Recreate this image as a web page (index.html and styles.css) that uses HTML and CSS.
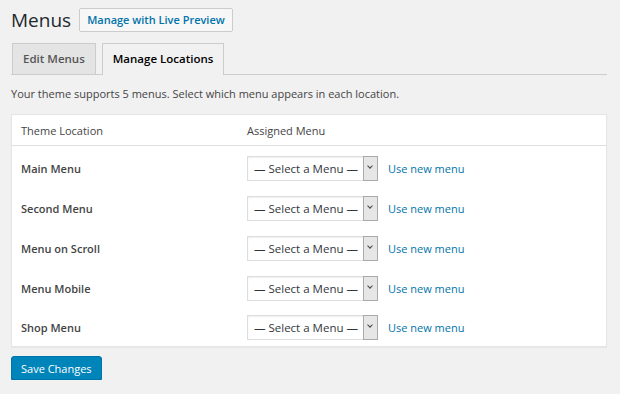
FILE: index.html
```html
<!DOCTYPE html>
<html lang="en">
<head>
<meta charset="UTF-8">
<title>Menus</title>
<link rel="stylesheet" href="styles.css">
</head>
<body>
    <div class="wrap">
        <!-- Title -->
        <div class="title-row">
            <h1>Menus</h1>
            <a href="#" class="title-action">Manage with Live Preview</a>
        </div>

        <!-- Tabs -->
        <div class="tabs">
            <a href="#" class="tab">Edit Menus</a>
            <a href="#" class="tab active">Manage Locations</a>
        </div>

        <p class="intro">Your theme supports 5 menus. Select which menu appears in each location.</p>

        <!-- Locations table -->
        <table class="locations">
            <thead>
                <tr>
                    <th class="col-location">Theme Location</th>
                    <th>Assigned Menu</th>
                </tr>
            </thead>
            <tbody>
                <tr>
                    <td class="col-location">Main Menu</td>
                    <td><span class="select">— Select a Menu —<span class="arrow"></span></span><a href="#" class="new-menu">Use new menu</a></td>
                </tr>
                <tr>
                    <td class="col-location">Second Menu</td>
                    <td><span class="select">— Select a Menu —<span class="arrow"></span></span><a href="#" class="new-menu">Use new menu</a></td>
                </tr>
                <tr>
                    <td class="col-location">Menu on Scroll</td>
                    <td><span class="select">— Select a Menu —<span class="arrow"></span></span><a href="#" class="new-menu">Use new menu</a></td>
                </tr>
                <tr>
                    <td class="col-location">Menu Mobile</td>
                    <td><span class="select">— Select a Menu —<span class="arrow"></span></span><a href="#" class="new-menu">Use new menu</a></td>
                </tr>
                <tr>
                    <td class="col-location">Shop Menu</td>
                    <td><span class="select">— Select a Menu —<span class="arrow"></span></span><a href="#" class="new-menu">Use new menu</a></td>
                </tr>
            </tbody>
        </table>

        <button class="save">Save Changes</button>
    </div>
</body>
</html>
```

FILE: styles.css
```css
body {
    margin: 0;
    background-color: #f1f1f1;
    font-family: "Open Sans", sans-serif;
    font-size: 11px;
    color: #444;
}
.wrap {
    padding: 7px 13px 0 11px;
}
.title-row {
    display: flex;
    align-items: center;
    height: 26px;
}
h1 {
    margin: 0;
    font-size: 19px;
    font-weight: 400;
    color: #23282d;
}
.title-action {
    margin-left: 8px;
    padding: 0 7px;
    height: 22px;
    line-height: 22px;
    border: 1px solid #ccc;
    background-color: #f7f7f7;
    color: #0073aa;
    font-size: 11px;
    font-weight: 600;
    text-decoration: none;
    border-radius: 2px;
}
.tabs {
    display: flex;
    margin-top: 10px;
    padding-left: 1px;
    border-bottom: 1px solid #ccc;
    height: 31px;
}
.tab {
    display: block;
    height: 30px;
    line-height: 30px;
    padding: 0 10px;
    margin-right: 6px;
    border: 1px solid #ccc;
    border-bottom: none;
    background-color: #e4e4e4;
    color: #555;
    font-size: 11.5px;
    font-weight: 600;
    text-decoration: none;
}
.tab.active {
    background-color: #f1f1f1;
    color: #000;
    height: 31px;
    margin-bottom: -1px;
}
.intro {
    margin: 11px 0 12px;
    line-height: 16px;
}
.locations {
    width: 100%;
    border-collapse: collapse;
    background-color: #fff;
    border: 1px solid #e5e5e5;
    box-shadow: 0 1px 1px rgba(0, 0, 0, 0.04);
}
.locations th {
    text-align: left;
    font-weight: 400;
    height: 30px;
    padding: 0 9px;
    border-bottom: 1px solid #e1e1e1;
}
.locations td {
    height: 40px;
    padding: 0 9px;
}
.locations tbody tr:first-child td {
    padding-top: 2px;
}
.locations tbody tr:last-child td {
    height: 38px;
}
.col-location {
    width: 208px;
}
.locations td.col-location {
    font-weight: 600;
    color: #444;
}
.select {
    display: inline-flex;
    align-items: center;
    vertical-align: middle;
    position: relative;
    width: 131px;
    height: 25px;
    padding-left: 6px;
    box-sizing: border-box;
    border: 1px solid #ddd;
    box-shadow: inset 0 1px 2px rgba(0, 0, 0, 0.07);
    color: #32373c;
    font-size: 11.5px;
}
.arrow {
    position: absolute;
    right: -1px;
    top: -1px;
    width: 13px;
    height: 23px;
    border: 1px solid #aaa;
    background-color: #e6e6e6;
}
.arrow::after {
    content: "";
    position: absolute;
    left: 4px;
    top: 7px;
    width: 3px;
    height: 3px;
    border-right: 1.5px solid #444;
    border-bottom: 1.5px solid #444;
    transform: rotate(45deg);
}
.new-menu {
    margin-left: 10px;
    color: #0073aa;
    text-decoration: none;
    vertical-align: middle;
}
.save {
    margin-top: 9px;
    height: 24px;
    padding: 0 9px;
    border: 1px solid #0073aa;
    border-radius: 3px;
    background-color: #0085ba;
    box-shadow: 0 1px 0 #006799;
    color: #fff;
    font-family: "Open Sans", sans-serif;
    font-size: 11px;
}
```
